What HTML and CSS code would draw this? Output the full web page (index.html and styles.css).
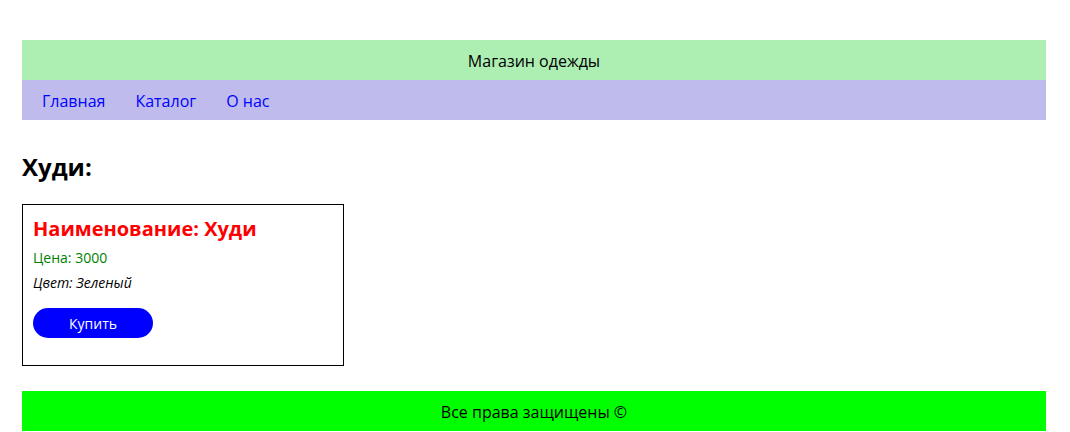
FILE: index.html
```html
<!DOCTYPE html>
<html lang="ru">
<head>
<meta charset="utf-8">
<title>Магазин одежды</title>
<link rel="stylesheet" href="styles.css">
</head>
<body>
<div class="page">
  <header class="site-header">Магазин одежды</header>
  <nav class="site-nav">
    <a href="#" class="nav-link">Главная</a>
    <a href="#" class="nav-link">Каталог</a>
    <a href="#" class="nav-link">О нас</a>
  </nav>
  <main class="content">
    <h2 class="section-title">Худи:</h2>
    <div class="card">
      <h3 class="card-title">Наименование: Худи</h3>
      <p class="card-price">Цена: 3000</p>
      <p class="card-color">Цвет: Зеленый</p>
      <button class="buy-btn">Купить</button>
    </div>
  </main>
  <footer class="site-footer">Все права защищены ©</footer>
</div>
</body>
</html>
```
FILE: styles.css
```css
* { box-sizing: content-box; }
body {
  margin: 0;
  font-family: "Open Sans", sans-serif;
  font-size: 16px;
  color: #000;
  background: #fff;
}
.page {
  width: 1024px;
  margin: 40px 0 0 22px;
}
.site-header {
  height: 30px;
  padding-top: 10px;
  text-align: center;
  line-height: 22px;
  background: #adeeb3;
}
.site-nav {
  height: 30px;
  display: flex;
  align-items: flex-start;
  gap: 30px;
  padding: 10px 20px 0;
  line-height: 22px;
  background: #bfbbec;
}
.nav-link {
  color: #0000ff;
  text-decoration: none;
}
.content {
  padding: 30px 0 25px;
}
.section-title {
  margin: 0 0 21px;
  font-size: 24px;
  font-weight: 700;
}
.card {
  width: 300px;
  height: 140px;
  padding: 10px;
  border: 1px solid #000;
}
.card-title {
  margin: 0 0 6px;
  font-size: 20px;
  font-weight: 700;
  color: #ff0000;
}
.card-price {
  margin: 0 0 6px;
  font-size: 14px;
  color: #008000;
}
.card-color {
  margin: 0 0 16px;
  font-size: 14px;
  font-style: italic;
}
.buy-btn {
  width: 120px;
  height: 30px;
  border: none;
  border-radius: 15px;
  background: #0000ff;
  color: #fff;
  font-family: "Open Sans", sans-serif;
  font-size: 14px;
  padding: 0;
}
.site-footer {
  height: 30px;
  padding-top: 10px;
  text-align: center;
  line-height: 22px;
  background: #00ff00;
}
```
